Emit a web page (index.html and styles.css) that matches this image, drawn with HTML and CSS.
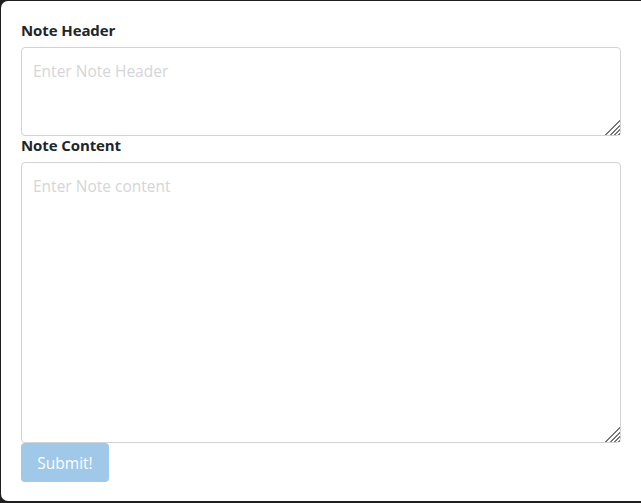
FILE: index.html
```html
<!DOCTYPE html>
<html>
<head>
<meta charset="utf-8">
<link rel="stylesheet" href="styles.css">
</head>
<body>
<div class="modal">
  <form class="note-form">
    <label class="field-label" for="hdr">Note Header</label>
    <textarea id="hdr" class="field field-header" placeholder="Enter Note Header"></textarea>
    <label class="field-label" for="cnt">Note Content</label>
    <textarea id="cnt" class="field field-content" placeholder="Enter Note content"></textarea>
    <button type="button" class="submit-btn">Submit!</button>
  </form>
</div>
</body>
</html>
```
FILE: styles.css
```css
html, body {
  margin: 0;
  padding: 0;
  background: #1e201f;
  overflow: hidden;
}
body {
  font-family: "Open Sans", "Noto Sans", sans-serif;
  width: 641px;
  height: 503px;
}
.modal {
  margin: 1px 0 0 1px;
  width: 646px;
  height: 500px;
  background: #ffffff;
  border-radius: 7px;
  box-sizing: border-box;
  padding: 20px 0 0 20px;
}
.note-form {
  display: flex;
  flex-direction: column;
  align-items: flex-start;
  width: 600px;
}
.field-label {
  font-weight: 700;
  font-size: 15px;
  line-height: 18px;
  color: #212529;
  margin-bottom: 8px;
  letter-spacing: -0.1px;
}
.field {
  display: block;
  width: 600px;
  box-sizing: border-box;
  border: 1px solid #d3d3d3;
  border-radius: 4px;
  padding: 11px 11px 9px;
  font-family: "Open Sans", "Noto Sans", sans-serif;
  font-size: 15.5px;
  line-height: 24px;
  color: #333;
  margin: 0;
  resize: vertical;
}
.field::placeholder {
  color: #d5d5d8;
}
.field::-webkit-resizer {
  background: linear-gradient(135deg,
    transparent 0 10.6px,
    #777777 10.6px 12px,
    transparent 12px 13.6px,
    #777777 13.6px 15px,
    transparent 15px 16.6px,
    #777777 16.6px 18px,
    transparent 18px 19.6px,
    #777777 19.6px 21px,
    transparent 21px);
}
.field-header {
  height: 89px;
}
.field-content {
  height: 281px;
}
.submit-btn {
  margin-top: 0;
  width: 88px;
  height: 39px;
  border: none;
  border-radius: 4px;
  background: #9fc8e9;
  color: #ffffff;
  font-family: "Open Sans", "Noto Sans", sans-serif;
  font-size: 15.5px;
  line-height: 40px;
  padding: 0;
}
```
